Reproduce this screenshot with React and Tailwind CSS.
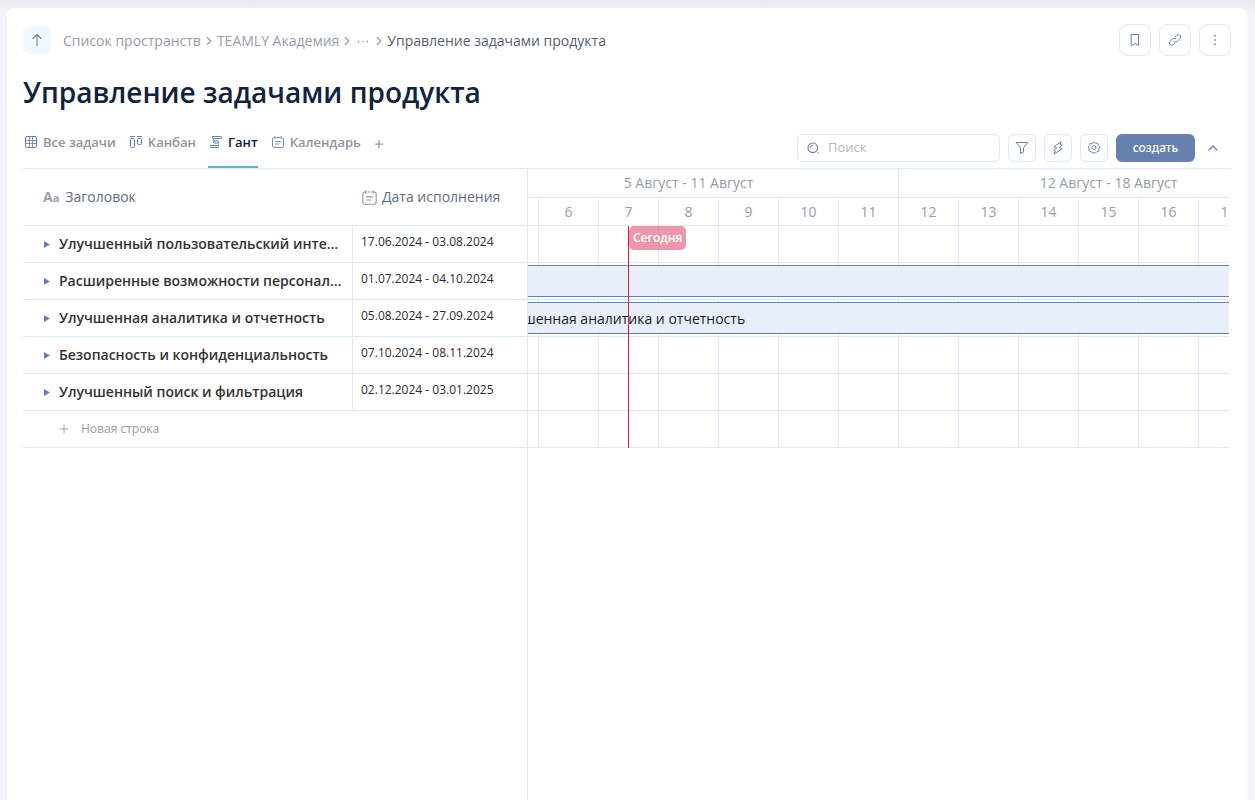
import { ChevronRight, ChevronUp, Plus } from 'lucide-react';

const tasks = [
  { id: 1, title: 'Улучшенный пользовательский интерфейс', dates: '17.06.2024 - 03.08.2024' },
  { id: 2, title: 'Расширенные возможности персонализации', dates: '01.07.2024 - 04.10.2024', bar: 'running' },
  { id: 3, title: 'Улучшенная аналитика и отчетность', dates: '05.08.2024 - 27.09.2024', bar: 'starting' },
  { id: 4, title: 'Безопасность и конфиденциальность', dates: '07.10.2024 - 08.11.2024' },
  { id: 5, title: 'Улучшенный поиск и фильтрация', dates: '02.12.2024 - 03.01.2025' },
];

const weeks = ['5 Август - 11 Август', '12 Август - 18 Август'];
const days = [5, 6, 7, 8, 9, 10, 11, 12, 13, 14, 15, 16, 17, 18];

const Icon = ({ size = 14, className = 'text-[#6880ad]', children }) => (
  <svg
    width={size}
    height={size}
    viewBox="0 0 14 14"
    fill="none"
    stroke="currentColor"
    strokeLinecap="round"
    strokeLinejoin="round"
    className={`shrink-0 ${className}`}
    aria-hidden="true"
  >
    {children}
  </svg>
);

const GridIcon = () => (
  <Icon>
    <rect x="1.5" y="1.5" width="11" height="11" rx="1.5" />
    <path d="M5.5 1.5v11M8.5 1.5v11M1.5 5.5h11M1.5 8.5h11" strokeWidth="0.8" />
  </Icon>
);

const KanbanIcon = () => (
  <Icon>
    <path d="M1.5 1.5h4M8.5 1.5h4" />
    <rect x="1.5" y="3.5" width="4" height="9" rx="1" />
    <rect x="8.5" y="3.5" width="4" height="6" rx="1" />
  </Icon>
);

const GanttIcon = () => (
  <Icon>
    <rect x="3.5" y="1.5" width="9" height="2" rx="0.6" />
    <rect x="4.5" y="6" width="5" height="2" rx="0.6" />
    <rect x="1.5" y="10.5" width="8" height="2" rx="0.6" />
    <path d="M4.5 3.5v2.500M9.500 8v2.500" strokeWidth="0.7" />
  </Icon>
);

const CalendarIcon = ({ size, className }) => (
  <Icon size={size} className={className}>
    <path d="M3.2 2.5A1.7 1.7 0 0 0 1.5 4.2v6.6a1.7 1.7 0 0 0 1.7 1.7h7.6a1.7 1.7 0 0 0 1.7-1.7V4.2a1.7 1.7 0 0 0-1.7-1.7M5.5 2.5h3M4 1.3v2.2M10 1.3v2.2" strokeWidth="0.9" />
    <path d="M4.5 6.5h5M4.5 9h3.5" strokeWidth="0.9" />
  </Icon>
);

const tabs = [
  { name: 'Все задачи', icon: GridIcon },
  { name: 'Канбан', icon: KanbanIcon },
  { name: 'Гант', icon: GanttIcon, active: true },
  { name: 'Календарь', icon: CalendarIcon },
];

const HeaderButton = ({ label, children }) => (
  <button
    type="button"
    aria-label={label}
    className="flex h-8 w-8 items-center justify-center rounded-lg border border-[#dde7f6]"
  >
    {children}
  </button>
);

const ToolButton = ({ label, children }) => (
  <button
    type="button"
    aria-label={label}
    className="flex h-7 w-7 items-center justify-center rounded-md border border-[#dde7f6]"
  >
    {children}
  </button>
);

const Breadcrumbs = () => (
  <nav className="flex items-center text-sm text-[#949daa]">
    <button
      type="button"
      aria-label="Наверх"
      className="mr-3 flex h-7 w-7 items-center justify-center rounded-md bg-[#eff8ff]"
    >
      <Icon>
        <path d="M7 12.5V1.5M3 5.5l4-4 4 4" strokeWidth="1.1" />
      </Icon>
    </button>
    <div className="flex items-center pt-0.5">
      <a href="#spaces">Список пространств</a>
      <ChevronRight className="mx-px h-3.5 w-3.5" strokeWidth={2} />
      <a href="#academy">TEAMLY Академия</a>
      <ChevronRight className="mx-px h-3.5 w-3.5" strokeWidth={2} />
      <button type="button" aria-label="Показать путь" className="mx-px">
        <Icon className="text-[#949daa]">
          <path d="M2 7.5h1.4M6.3 7.5h1.4M10.6 7.5h1.4" strokeWidth="1.6" strokeLinecap="butt" />
        </Icon>
      </button>
      <ChevronRight className="mx-px h-3.5 w-3.5" strokeWidth={2} />
      <a href="#board" className="text-[#56606e]">Управление задачами продукта</a>
    </div>
  </nav>
);

const Toolbar = () => (
  <div className="mt-[18px] flex items-start justify-between border-b border-[#dde7f6]">
    <div className="flex items-start gap-3">
      {tabs.map(({ name, icon: TabIcon, active }) => (
        <button
          key={name}
          type="button"
          className={`flex h-[38px] items-start gap-[5px] border-b-2 pl-px text-[13px] leading-6 font-semibold ${
            active ? 'border-[#62b0d9] text-[#14213d]' : 'border-transparent text-[#8d949e]'
          }`}
        >
          <span className="flex h-6 items-center">
            <TabIcon />
          </span>
          {name}
        </button>
      ))}
      <button type="button" aria-label="Добавить вид" className="flex h-7 items-center">
        <Plus className="h-3 w-3 text-[#8296bd]" strokeWidth={2.5} />
      </button>
    </div>

    <div className="mt-1 flex items-center gap-2">
      <label className="flex h-7 w-[203px] items-center gap-2 rounded-md border border-[#dde7f6] px-2">
        <Icon>
          <circle cx="6.8" cy="6.8" r="4.8" strokeWidth="1.1" />
          <path d="M4.2 6.5a2.6 2.6 0 0 1 2.3-2.3M11.5 11.5l.8.8" />
        </Icon>
        <input
          type="text"
          placeholder="Поиск"
          aria-label="Поиск"
          className="w-full min-w-0 text-[13px] outline-none placeholder:text-[#b1bac4]"
        />
      </label>
      <ToolButton label="Фильтр">
        <Icon>
          <path d="M1.5 1.5h11l-4 5.5v4l-3 1.5V7z" />
        </Icon>
      </ToolButton>
      <ToolButton label="Автоматизации">
        <Icon>
          <path d="M9.8 1 3 5.6l2.8 1.3L2.8 9.5l1.5.5L3 13l8.2-5.2-2.7-1.2 2.8-2.4-1.8-.6z" />
        </Icon>
      </ToolButton>
      <ToolButton label="Настройки">
        <Icon>
          <path d="M7 1.2 8.7 2.4l2.2-.1.4 2.1 1.5 1.5-.9 1.8.1 2.2-2.1.6L8.6 12.2 7 11.5l-1.6.7-1.3-1.7-2.1-.6.1-2.2-.9-1.8 1.5-1.5.4-2.1 2.2.1z" strokeWidth="0.9" />
          <circle cx="7" cy="6.7" r="2" strokeWidth="0.9" />
        </Icon>
      </ToolButton>
      <button
        type="button"
        className="h-7 w-[79px] rounded-md bg-[#6880ad] font-['Noto_Sans',sans-serif] text-xs font-medium text-white"
      >
        создать
      </button>
      <button type="button" aria-label="Свернуть" className="flex items-center px-0.5">
        <ChevronUp className="mr-2 h-4 w-4 text-[#6880ad]" strokeWidth={1.8} />
      </button>
    </div>
  </div>
);

const TaskTable = () => (
  <div className="w-[505px] shrink-0 border-r border-[#dde7f6]">
    <table className="w-full table-fixed border-separate border-spacing-0 text-left">
      <thead>
        <tr className="h-[57px] text-sm text-[#626d7d]">
          <th className="w-[330px] border-b border-[#dde7f6] pl-5 font-normal">
            <span className="flex items-center gap-1.5">
              <span className="text-sm font-bold text-[#9aa2b1]" aria-hidden="true">
                A<span className="text-[11px]">a</span>
              </span>
              Заголовок
            </span>
          </th>
          <th className="border-b border-[#dde7f6] pl-2 font-normal">
            <span className="flex items-center gap-1">
              <CalendarIcon size={17} className="text-[#8f98a8]" />
              Дата исполнения
            </span>
          </th>
        </tr>
      </thead>
      <tbody>
        {tasks.map((task) => (
          <tr key={task.id} className="h-[37px]">
            <td className="border-r border-b border-[#dde7f6] pr-2 pl-5">
              <div className="flex items-center gap-2">
                <button type="button" aria-label="Развернуть" className="flex">
                  <svg width="8" height="8" viewBox="0 0 8 8" className="text-[#6880ad]" aria-hidden="true">
                    <path d="M1 1l6 3.5-6 3.5z" fill="currentColor" />
                  </svg>
                </button>
                <span className="truncate text-sm font-semibold text-[#333]">{task.title}</span>
              </div>
            </td>
            <td className="border-b border-[#dde7f6] pb-1 pl-2 text-xs text-[#2b2b2b]">{task.dates}</td>
          </tr>
        ))}
        <tr className="h-[37px]">
          <td colSpan={2} className="border-b border-[#dde7f6] pl-[34px]">
            <button type="button" className="flex items-center gap-2.5 text-xs text-[#949daa]">
              <Plus className="h-3.5 w-3.5" strokeWidth={1.5} />
              Новая строка
            </button>
          </td>
        </tr>
      </tbody>
    </table>
  </div>
);

const TimelineRow = ({ task }) => (
  <div className="relative flex h-[37px] border-b border-[#dde7f6]">
    {days.map((day) => (
      <div key={day} className="w-[60px] shrink-0 border-r border-[#dde7f6]" />
    ))}
    {task?.bar && (
      <div className="absolute inset-x-0 top-0.5 flex h-8 items-center border-y border-[#6880ad] bg-[#e8effa] px-3 pt-0.5 text-sm text-[#1c1c1c]">
        {task.bar === 'starting' && task.title}
      </div>
    )}
  </div>
);

const Timeline = () => (
  <div className="mr-0.5 min-w-0 flex-1 overflow-hidden">
    {/* scrolled so the week starts just left of the visible area */}
    <div className="-ml-[49px] w-[840px] text-sm text-[#949daa]">
      <div className="flex h-[29px] border-b border-[#dde7f6]">
        {weeks.map((week) => (
          <div key={week} className="flex w-[420px] items-center justify-center border-r border-[#dde7f6]">
            {week}
          </div>
        ))}
      </div>
      <div className="flex h-7 border-b border-[#dde7f6]">
        {days.map((day) => (
          <div key={day} className="flex w-[60px] items-center justify-center border-r border-[#dde7f6]">
            {day}
          </div>
        ))}
      </div>
      <div className="relative">
        {tasks.map((task) => (
          <TimelineRow key={task.id} task={task} />
        ))}
        <TimelineRow />
        <div className="absolute inset-y-0 left-[149px] border-l border-[#d6204e]">
          <span className="flex h-6 items-center rounded-[5px] bg-[#e5698a]/70 px-1 text-xs font-semibold text-white">
            Сегодня
          </span>
        </div>
      </div>
    </div>
  </div>
);

export default function App() {
  return (
    <div className="flex min-h-screen flex-col bg-[#f3f4f9] bg-linear-to-b from-[#e9eaef] to-[#f3f4f9] to-[12px] pt-2 pr-2 pl-[7px] font-['Open_Sans',sans-serif]">
      <main className="flex flex-1 flex-col rounded-t-lg bg-white px-4 pt-4">
        <header className="flex items-center justify-between">
          <Breadcrumbs />
          <div className="flex gap-2">
            <HeaderButton label="В закладки">
              <Icon>
                <path d="M3.5 1.5h7v11L7 10.5l-3.5 2z" />
              </Icon>
            </HeaderButton>
            <HeaderButton label="Скопировать ссылку">
              <Icon>
                <path d="M6 8.3a2.3 2.3 0 0 0 3.3 0l2.6-2.6a2.3 2.3 0 0 0-3.3-3.3L7.3 3.7M8 5.7a2.3 2.3 0 0 0-3.3 0L2.1 8.3a2.3 2.3 0 0 0 3.3 3.3l1.3-1.3" />
              </Icon>
            </HeaderButton>
            <HeaderButton label="Ещё">
              <Icon>
                <path d="M7 2v1.6M7 6.2v1.6M7 10.4V12" strokeWidth="1.6" strokeLinecap="butt" />
              </Icon>
            </HeaderButton>
          </div>
        </header>
        <h1 className="mt-4 text-[28px] leading-10 font-semibold text-[#14213d]">
          Управление задачами продукта
        </h1>
        <Toolbar />
        <div className="flex flex-1">
          <TaskTable />
          <Timeline />
        </div>
      </main>
    </div>
  );
}
